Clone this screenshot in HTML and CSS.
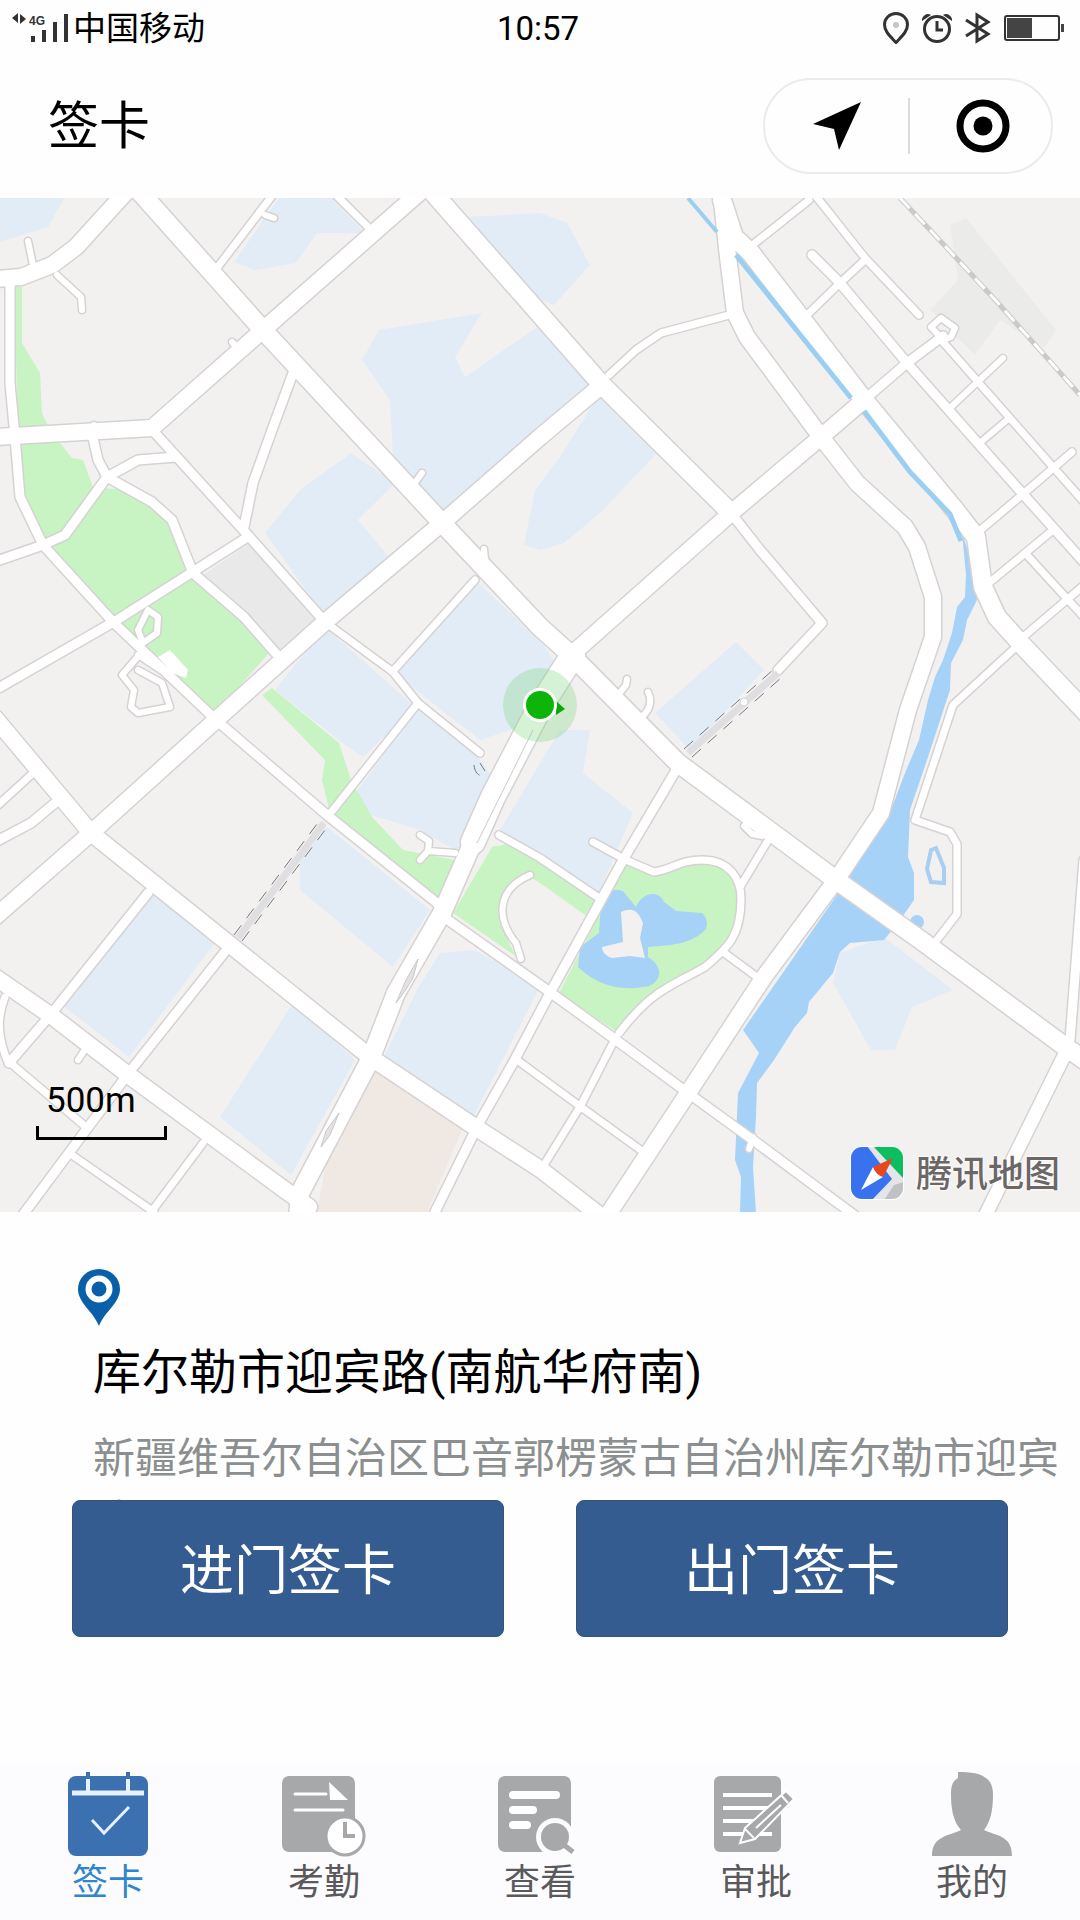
FILE: index.html
```html
<!DOCTYPE html>
<html lang="zh-CN">
<head>
<meta charset="utf-8">
<meta name="viewport" content="width=device-width, initial-scale=1">
<title>签卡</title>
<link rel="stylesheet" href="styles.css">
</head>
<body>
<div class="status">
  <div class="carrier">
    <svg class="signal" width="58" height="32" viewBox="0 0 58 32" aria-hidden="true">
      <path d="M6 0v10l-6-5zM8 1l6 5-6 5z" />
      <text x="17" y="12">4G</text>
      <path d="M19 23h4v6h-4zM30 17h4v12h-4zM41 9h4v20h-4zM52 1h4v28h-4z" />
    </svg>
    <span>中国移动</span>
  </div>
  <time class="clock">10:57</time>
  <div class="indicators" aria-hidden="true">
    <svg width="26" height="32" viewBox="0 0 26 32"><path class="line" d="M13 30.500C7 24 1.500 19.500 1.500 12.500a11.500 11 0 0 1 23 0C24.500 19.500 19 24 13 30.500z"/><circle cx="13" cy="13" r="3" fill="#c4c4c4"/></svg>
    <svg width="30" height="32" viewBox="0 0 30 32"><circle class="line" cx="15" cy="17" r="12.500"/><path class="line" d="M15 9v9h6"/><path d="M0 9a6 6 0 0 1 9-6zM30 9a6 6 0 0 0-9-6z" fill="#333"/></svg>
    <svg width="26" height="32" viewBox="0 0 26 32"><path class="line" d="M1 8l22 14-11 7V3l11 7L1 24"/></svg>
    <svg width="60" height="32" viewBox="0 0 60 32"><rect class="thin" x="1" y="4" width="54" height="24" rx="2"/><path d="M3 6h25v20H3zM57 12h3v8h-3z" fill="#444"/></svg>
  </div>
</div>

<header class="bar">
  <h1>签卡</h1>
  <div class="capsule">
    <button type="button" aria-label="定位"><svg width="48" height="48" viewBox="0 0 48 48"><path d="M48 0L26 48 21 27 0 22z"/></svg></button>
    <button type="button" aria-label="关闭"><svg width="54" height="54" viewBox="0 0 54 54"><circle cx="27" cy="27" r="23" fill="none" stroke="#000" stroke-width="7"/><circle cx="27" cy="27" r="9.500"/></svg></button>
  </div>
</header>

<section class="map" aria-label="地图">
  <svg class="canvas" viewBox="0 198 1080 1014" role="img" aria-label="库尔勒市街道">
    <defs>
      <g id="roads">
        <path class="w6" d="M28 241l5 24M57 275l24 22 1 13M265 215l9 3M627 679l-1 6-7 9M648 692c5 10 1 20-8 26M422 473l-8 11M484 549l2 20M232 342l5 6M94 425v6M78 1060l8-12M753 1137l-4 12M744 826l8 8 10 2"/>
        <path class="w6" d="M943 340l-12-13 10-9 14 10-4 9zM1003 358l-52 49M1007 420l-26 22M530 875c-35 15-33 45-14 68l5 16M420 835l9 6-1 10 27 2M428 851l-8 9"/>
        <path class="w6" d="M148 610l10 7-1 16-14 10-5-13zM141 653l-19 22 12 15-3 17 7 6 32-6-8-24-24-13M138 655l38 25"/>
        <path class="w7" d="M275 192l-58 76M333 192l35 35M475 580l-82 91M480 753l-62-50-25-31-68-50M329 815l89-112M729 315l-68 18-25 17-27 25M809 200l-59 47M815 195l50 63 54 57M865 260l-25 23-33 32M943 342l36 41 74 84 40 45M1072 452l-50 43-45 38M1053 530l-64 53M1027 555l66 72M1090 580l-68 58"/>
        <path class="w7" d="M1015 648l-62 57-38 115 35 12 7 12v70l-24 31M499 835l41 23 59 40M593 842l33 18 28 12c20-3 25-12 48-12 27 0 39 18 39 39 0 36-12 48-36 68-35 20-52 22-86 66M767 842l-27 45M723 952l34 25M5 997c-10 25-5 45 2 63l79 67M31 775L-3 806M72 1155l82 57M203 1143l-54 72M517 1060l64 47 61 44M616 1037l-35 68-42 68"/>
        <path class="w9" d="M10 280v103l5 54 5 60 23 48 71 78 102 97 111 95 110 88 11 17 99 70 69 50 72 53 65 47 105 78M-3 561l46-16 22-10 42-58 31-17 38-3M93 438l5 22 9 17 45 25 20 18 21 53 51 44 35 40M155 433l91 100 79 89M293 373l-21 57-19 53-9 44M246 538L117 620-3 689M907 363l36-27M864 400l43-37M812 255l28 28 67 80 115 130 61 68M731 513l29 37 62 73-44 47"/>
        <path class="w9" d="M148 893l-96 120-43 50M224 953l-93 117-45 60-64 86M55 803l-24 20-34 18M678 767l-55 93-73 133-37 70-34 60-46 93M1084 860l-14 180"/>
        <path class="w13" d="M1067 1050l-82 166"/>
        <path class="w16" d="M126 192L76 247 52 265 21 277-3 279M420 192L263 330 152 428-3 437M602 385l-62 52-98 86-117 99-109 98L91 833-5 917M571 655l160-142 90-76 43-37M-5 718l96 115 279 224 105 70 65 42 62 48M-5 977l58 40 78 60 158 116 20 14M721 192l7 65 7 56 12 24 74 100 36 46 48 44 12 20 16 50v40l-25 73-27 103-45 67-72 97-76 116-83 126"/>
        <path class="w18" d="M140 192l123 138 179 193 98 104 31 28 107 108 158 117 86 61 145 107 20 14M429 188l173 197 129 128M722 200l12 37 17 16 113 147 91 110 21 27 7 50 14 30 27 30 70 74"/>
        <path class="w24" d="M573 655l-33 52-47 90-20 45"/>
        <path class="w18" d="M473 842l-31 71-46 80-26 67-70 133-2 25"/>
      </g>
    </defs>
    <rect y="198" width="1080" height="1014" fill="#f3f1f0"/>
    <g class="district">
      <path d="M0 198h64l-16 29-48 15zM279 198h52l34 35h-48l-21 30-41 7-21-8zM468 217l72-4 27 10 23 42-36 40-14-5zM379 330l103-17-27 44 10 20 75-52 62 60-160 138-49-68-3-55-28-40z"/>
      <path d="M351 453l44 30-37 37 31 37-64 60-60-84 35-43zM602 390l55 63-57 60-36 30-24 7-16-5 11-55 25-33zM478 583l62 57 20 30-20 50-60 20-87-68zM325 627l90 80-52 50-18-12-70-55z"/>
      <path d="M418 710l57 43 17 24-32 76-40-23-55-17-10-20zM327 827l103 83-37 57-93-77v-30zM148 887l69 53-88 117-67-52zM293 1003l62 57-64 115-71-58zM440 953l35-3 65 37-67 130-89-60 33-67z"/>
      <path d="M560 730h30l-7 43 50 40-36 84-97-67zM736 642l28 28-74 80-35-37zM840 953l44-16 69 53-41 17-17 43h-24l-38-67z"/>
    </g>
    <path fill="#e9e9ea" d="M250 543l69 77-38 33-81-76z"/>
    <path fill="#ebebea" d="M950 225l16-7 90 112-12 18-44-28-25 35-45-45 28-30z"/>
    <path fill="#efe8e3" d="M375 1063l90 60-38 89H317l10-55z"/>
    <g class="park">
      <path d="M14 287h8v56l18 30 2 40 8 17-32 2zM20 443h40l12 15 11 2 10 27 34 3 28 17 24 30 9 36 53 47 28 33-55 62-62-62-109-108-21-48z"/>
      <path d="M262 695l10-7 67 55 12 37 21 37 31 33 52 10-18 40-106-83-9-37 3-20z"/>
      <path d="M492 847l21-4 27 17 55 40-7 17-48-34-10-6c-35 15-33 50-13 80l-64-44zM626 863l28 9c20-3 25-12 48-12 27 0 39 18 39 39 0 36-12 48-36 68-35 20-52 22-88 65l-58-39z"/>
    </g>
    <g class="water">
      <path d="M962 533l4 42-1 22-8 10-5 26-9 27-8 17-7 23-9 40-14 33-14 37-45 72-103 148 16 23-21 40-3 67 6 17-1 36h16l-3-46 3-50 1-34 17-23 21-33 12-14 2-11 24-29 7-21 10-9 34-3 14-17 16-23v-27l-6-16 2-47 17-50 23-70 1-27 12-23 4-20 10-20-7-43z"/>
      <path d="M600 917l2-20c4-8 17-8 21-6l13 16c6-14 22-18 28-5l12 9 26 2c6 5 6 13 3 17-15 15-35 15-57 17v10c20 12 10 30-5 30-24 4-46-2-65-20l2-20 19-14z"/>
      <circle cx="917" cy="922" r="7"/>
      <path class="pond" d="M931 850l5-2 8 20v15l-13-1-4-13z"/>
    </g>
    <path fill="#f3f1f0" d="M621 912c12-6 18 0 22 11l-3 15 5 20-15-2-18 2c-6-2-10-6-10-11l21-5z"/>
    <use href="#roads" class="casing"/>
    <use href="#roads" class="fill"/>
    <g class="water">
      <path class="stream thin-stream" d="M688 198l29 34"/>
      <path class="stream" d="M736 255l115 143M864 411l46 61 40 42 11 27"/>
    </g>
    <path fill="#fff" d="M158 657l12-7 18 20-2 8-14-5z"/>
    <path d="M533 730l-56 113M418 959l-12 21-10 23 9-12 8-13zM339 1113l-13 18-5 16 9-12z" fill="#e4e1e2" stroke="#cdc8ca"/>
    <path class="rail" d="M900 198l46 49 52 56 82 92"/>
    <path class="rail-dash" d="M900 198l46 49 52 56 82 92"/>
    <path class="tunnel" d="M238 938l86-115M688 753l90-80"/>
    <path class="tunnel-edge" d="M234 935l86-115M242 941l86-115M684 749l90-80M692 757l90-80M474 765c1 8 4 10 8 11M480 763l5 8"/>
    <circle cx="744" cy="702" r="4" fill="#fff" stroke="#ccd8d4"/>
    <circle cx="540" cy="705" r="37" fill="#7fd67f" fill-opacity=".32"/>
    <path d="M556 701l9 8-9 6z" fill="#0aa80a"/>
    <circle cx="540" cy="705" r="15.500" fill="#0db50a" stroke="#fff" stroke-width="3"/>
  </svg>
  <div class="scale"><span>500m</span></div>
  <div class="brand">
    <svg width="54" height="54" viewBox="0 0 54 54" aria-hidden="true">
      <defs><clipPath id="tile"><rect x="1" y="1" width="52" height="52" rx="11"/></clipPath></defs>
      <rect width="54" height="54" rx="12" fill="#fff"/>
      <g clip-path="url(#tile)">
        <rect width="54" height="54" fill="#e3e5e8"/>
        <path d="M0 0h17l25 33-20 21H0z" fill="#3872ee"/>
        <path d="M23 0h31v33z" fill="#0bbf61"/>
        <path d="M34 54l10-15 10-3v18z" fill="#bfc1c4"/>
      </g>
      <path d="M23 21L11 44l22-13z" fill="#fff"/>
      <path d="M43 12l-20 9q3 8 10 10z" fill="#e8481f"/>
    </svg>
    <span>腾讯地图</span>
  </div>
</section>

<main class="place">
  <svg class="pin" width="42" height="57" viewBox="0 0 42 57" aria-hidden="true"><path d="M21 57C15 42 0 34 0 20a21 20 0 0 1 42 0C42 34 27 42 21 57z" fill="#0a60a8"/><circle cx="21" cy="20" r="10.500" fill="none" stroke="#fff" stroke-width="6"/></svg>
  <h2>库尔勒市迎宾路(南航华府南)</h2>
  <p>新疆维吾尔自治区巴音郭楞蒙古自治州库尔勒市迎宾路2号</p>
  <div class="actions">
    <button type="button">进门签卡</button>
    <button type="button">出门签卡</button>
  </div>
</main>

<nav class="tabs">
  <a class="current" href="#checkin" aria-current="page">
    <svg width="84" height="86" viewBox="0 0 84 86" aria-hidden="true"><rect x="2" y="5" width="80" height="80" rx="8" fill="#3b70b1"/><path d="M22 1v6M62 1v6" stroke="#3b70b1" stroke-width="4"/><path d="M22 8v12M62 8v12" stroke="#e6f1fb" stroke-width="4"/><path d="M6 22h72" stroke="#e6f1fb" stroke-width="5"/><path d="M26 49l12 13 25-26" fill="none" stroke="#e6f1fb" stroke-width="3"/></svg>
    <span>签卡</span>
  </a>
  <a href="#attendance">
    <svg width="84" height="86" viewBox="0 0 84 86" aria-hidden="true"><rect x="0" y="5" width="73" height="76" rx="7"/><path d="M47 11l19 18H48z" fill="#fff"/><path d="M13 23h31M13 39h48" stroke="#fff" stroke-width="3" stroke-linecap="round"/><circle cx="63" cy="65" r="19" fill="#fff" stroke="#a6a8aa" stroke-width="3"/><path d="M63 51v14h10" fill="none" stroke="#a6a8aa" stroke-width="4"/></svg>
    <span>考勤</span>
  </a>
  <a href="#records">
    <svg width="84" height="86" viewBox="0 0 84 86" aria-hidden="true"><rect x="0" y="5" width="73" height="76" rx="7"/><path d="M15 24h43M15 39h20M15 54h14" stroke="#fff" stroke-width="8" stroke-linecap="round"/><circle cx="57" cy="66" r="19" fill="#fcfbfe"/><path d="M40 72l5 10h28l3-12z" fill="#fcfbfe"/><circle cx="57" cy="66" r="14"/><path d="M66 74l9 7" stroke="#a6a8aa" stroke-width="5"/></svg>
    <span>查看</span>
  </a>
  <a href="#approval">
    <svg width="84" height="86" viewBox="0 0 84 86" aria-hidden="true"><rect x="0" y="5" width="67" height="76" rx="6"/><path d="M9 24h49M9 37h49M9 50h49M9 63h49" stroke="#fff" stroke-width="4"/><path d="M26 72l5-15 41-37 8 8-39 40z" stroke="#fff" stroke-width="2"/><path d="M31 58l9 9M42 57l25-23M67 24l7 8" stroke="#fff" stroke-width="2"/></svg>
    <span>审批</span>
  </a>
  <a href="#me">
    <svg width="84" height="86" viewBox="0 0 84 86" aria-hidden="true"><path d="M28 1c17 0 35 2 35 22 0 18-3 28-9 36 12 6 28 5 28 26H2C2 64 20 65 31 59 23 50 21 38 21 23c0-9 2-13 7-16z"/></svg>
    <span>我的</span>
  </a>
</nav>
</body>
</html>
```
FILE: styles.css
```css
* { box-sizing: border-box; }

body {
  margin: 0;
  min-height: 100vh;
  display: flex;
  flex-direction: column;
  background: #fefefe;
  color: #000;
  font-family: Roboto, "Noto Sans CJK SC", sans-serif;
}

h1, h2, p { margin: 0; font-weight: 400; }
button { font: inherit; border: 0; padding: 0; background: none; cursor: pointer; }
svg { display: block; }

/* Status bar */
.status {
  display: grid;
  grid-template-columns: 1fr auto 1fr;
  align-items: center;
  height: 56px;
  padding: 2px 16px 0 12px;
  font-size: 33px;
  line-height: 40px;
}
.carrier { display: flex; align-items: center; gap: 3px; }
.signal { fill: #333; }
.signal text { font: 700 12px "Liberation Sans", sans-serif; }
.indicators { display: flex; justify-content: flex-end; align-items: center; gap: 13px; padding-bottom: 2px; }
.indicators .line { fill: none; stroke: #333; stroke-width: 3; }
.indicators .thin { fill: none; stroke: #333; stroke-width: 2; }

/* Title bar */
.bar {
  display: flex;
  justify-content: space-between;
  align-items: center;
  height: 142px;
  padding: 0 27px 0 48px;
}
.bar h1 { font-size: 51px; line-height: 60px; }
.capsule {
  display: flex;
  width: 290px;
  height: 96px;
  margin-bottom: 2px;
  border: 2px solid #ebebeb;
  border-radius: 48px;
}
.capsule button {
  flex: 1 1 0;
  display: flex;
  justify-content: center;
  align-items: center;
}
.capsule button + button {
  justify-content: flex-start;
}
.capsule button + button::before {
  content: "";
  width: 2px;
  height: 56px;
  margin-right: 46px;
  background: #dcdcdc;
}

/* Map */
.map { position: relative; }
.canvas { width: 100%; height: auto; }
.district { fill: #e1ecf6; }
.park { fill: #c8f3c2; }
.water { fill: #a6d2f7; }
.water .stream { fill: none; stroke: #9bcff2; stroke-width: 5; }
.water .thin-stream { stroke-width: 4; }
.water .pond { fill: none; stroke: #a6cff2; stroke-width: 4; }
#roads path {
  fill: none;
  stroke-linecap: round;
  stroke-linejoin: round;
  stroke-width: calc((var(--w) + var(--edge)) * 1px);
}
.casing { --edge: 3; stroke: #d6d2d3; }
.fill { --edge: 0; stroke: #fff; }
.w6 { --w: 6; }
.w7 { --w: 7; }
.w9 { --w: 9; }
.w13 { --w: 13; }
.w16 { --w: 16; }
.w18 { --w: 18; }
.w24 { --w: 24; }
.rail, .rail-dash, .tunnel, .tunnel-edge { fill: none; }
.rail { stroke: #cacaca; stroke-width: 5; }
.rail-dash { stroke: #fff; stroke-width: 3; stroke-dasharray: 14 8; }
.tunnel { stroke: #dfdfe2; stroke-width: 7; }
.tunnel-edge { stroke: #77777b; stroke-width: 1; stroke-dasharray: 12 9; }

.scale {
  position: absolute;
  left: 36px;
  bottom: 72px;
  width: 131px;
  padding: 0 10px 19px;
  font-size: 35px;
  line-height: 40px;
}
.scale::after {
  content: "";
  position: absolute;
  inset: auto 0 0;
  height: 11px;
  border: solid #000;
  border-width: 0 3px 3px;
}
.brand {
  position: absolute;
  right: 20px;
  bottom: 12px;
  display: flex;
  align-items: center;
  gap: 12px;
  color: #6b6766;
  font-size: 36px;
  font-weight: 500;
  line-height: 48px;
  text-shadow: 0 0 3px #fff, 0 0 3px #fff;
}
.brand span { padding-top: 4px; }

/* Current place */
.place { padding: 57px 0 72px; }
.pin { margin-left: 78px; }
.place h2 {
  margin: 15px 0 0 93px;
  font-size: 48px;
  line-height: 64px;
}
/* Fixed height: the buttons lie over a second address line */
.place p {
  height: 72px;
  margin: 23px 20px 0 93px;
  color: #8b8f8f;
  font-size: 42px;
  line-height: 62px;
}
.actions {
  position: relative;
  display: grid;
  grid-template-columns: 1fr 1fr;
  gap: 72px;
  padding: 0 72px;
}
.actions button {
  height: 137px;
  padding-bottom: 4px;
  border: 1px solid #34527a;
  border-radius: 8px;
  background: #355c90;
  color: #fff;
  font-size: 54px;
}

/* Tab bar */
.tabs {
  display: grid;
  grid-template-columns: repeat(5, 1fr);
  margin-top: auto;
  padding: 7px 0 15px;
  background: #fcfbfe;
}
.tabs a {
  display: flex;
  flex-direction: column;
  align-items: center;
  gap: 4px;
  color: #5a5a5c;
  font-size: 36px;
  line-height: 44px;
  text-decoration: none;
}
.tabs svg { fill: #a6a8aa; }
.tabs .current { color: #2e86cf; }
```
